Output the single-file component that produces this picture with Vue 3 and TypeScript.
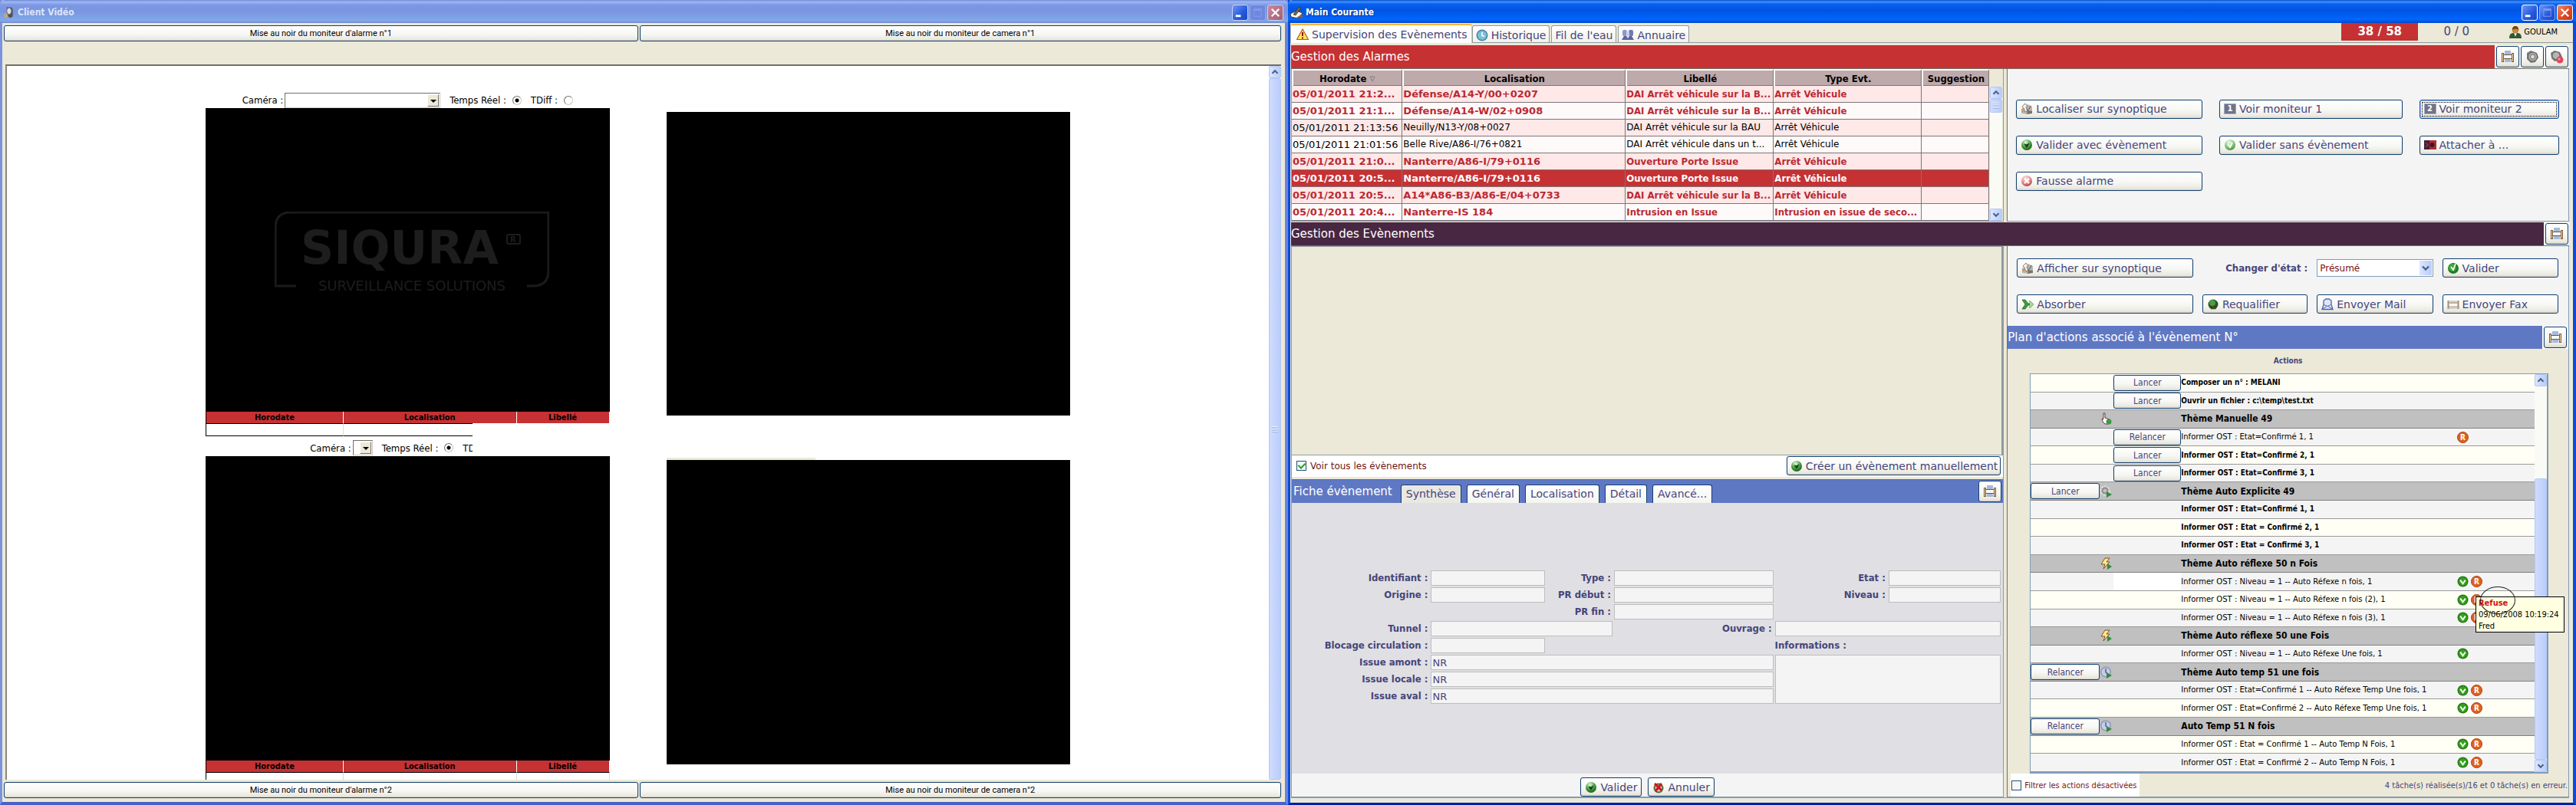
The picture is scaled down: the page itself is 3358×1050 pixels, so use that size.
<script setup lang="ts">
import { ref } from 'vue'

interface Alarm {
  date: string
  place: string
  label: string
  type: string
  state: 'unread' | 'read' | 'selected'
}

interface Command {
  text: string
  icon?: string
  monitor?: number
  focus?: boolean
}

interface Action {
  text: string
  theme?: boolean
  done?: boolean
  themeButton?: string
  icon?: string
  button?: string
  ok?: boolean
  refused?: boolean
  tip?: boolean
  blank?: boolean
}

const alarms: Alarm[] = [
  { date: '05/01/2011 21:2...', place: 'Défense/A14-Y/00+0207', label: 'DAI Arrêt véhicule sur la B...', type: 'Arrêt Véhicule', state: 'unread' },
  { date: '05/01/2011 21:1...', place: 'Défense/A14-W/02+0908', label: 'DAI Arrêt véhicule sur la B...', type: 'Arrêt Véhicule', state: 'unread' },
  { date: '05/01/2011 21:13:56', place: 'Neuilly/N13-Y/08+0027', label: 'DAI Arrêt véhicule sur la BAU', type: 'Arrêt Véhicule', state: 'read' },
  { date: '05/01/2011 21:01:56', place: 'Belle Rive/A86-I/76+0821', label: 'DAI Arrêt véhicule dans un t...', type: 'Arrêt Véhicule', state: 'read' },
  { date: '05/01/2011 21:0...', place: 'Nanterre/A86-I/79+0116', label: 'Ouverture Porte Issue', type: 'Arrêt Véhicule', state: 'unread' },
  { date: '05/01/2011 20:5...', place: 'Nanterre/A86-I/79+0116', label: 'Ouverture Porte Issue', type: 'Arrêt Véhicule', state: 'selected' },
  { date: '05/01/2011 20:5...', place: 'A14*A86-B3/A86-E/04+0733', label: 'DAI Arrêt véhicule sur la B...', type: 'Arrêt Véhicule', state: 'unread' },
  { date: '05/01/2011 20:4...', place: 'Nanterre-IS 184', label: 'Intrusion en Issue', type: 'Intrusion en issue de seco...', state: 'unread' },
]

const alarmButtons: Command[] = [
  { icon: 'locate', text: 'Localiser sur synoptique' },
  { monitor: 1, text: 'Voir moniteur 1' },
  { monitor: 2, text: 'Voir moniteur 2', focus: true },
  { icon: 'check', text: 'Valider avec évènement' },
  { icon: 'check-light', text: 'Valider sans évènement' },
  { icon: 'attach', text: 'Attacher à ...' },
  { icon: 'false', text: 'Fausse alarme' },
]

const actions: Action[] = [
  { text: 'Composer un n° : MELANI', button: 'Lancer' },
  { text: 'Ouvrir un fichier : c:\\temp\\test.txt', button: 'Lancer' },
  { text: 'Thème Manuelle 49', theme: true, icon: 'hand' },
  { text: 'Informer OST : Etat=Confirmé 1, 1', button: 'Relancer', done: true, refused: true },
  { text: 'Informer OST : Etat=Confirmé 2, 1', button: 'Lancer' },
  { text: 'Informer OST : Etat=Confirmé 3, 1', button: 'Lancer' },
  { text: 'Thème Auto Explicite 49', theme: true, icon: 'gear', themeButton: 'Lancer' },
  { text: 'Informer OST : Etat=Confirmé 1, 1' },
  { text: 'Informer OST : Etat = Confirmé 2, 1' },
  { text: 'Informer OST : Etat = Confirmé 3, 1' },
  { text: 'Thème Auto réflexe 50 n Fois', theme: true, icon: 'bolt' },
  { text: 'Informer OST : Niveau = 1 -- Auto Réfexe n fois, 1', done: true, ok: true, refused: true, blank: true },
  { text: 'Informer OST : Niveau = 1 -- Auto Réfexe n fois (2), 1', done: true, ok: true, refused: true, tip: true },
  { text: 'Informer OST : Niveau = 1 -- Auto Réfexe n fois (3), 1', done: true, ok: true, refused: true },
  { text: 'Thème Auto réflexe 50 une Fois', theme: true, icon: 'bolt' },
  { text: 'Informer OST : Niveau = 1 -- Auto Réfexe Une fois, 1', done: true, ok: true },
  { text: 'Thème Auto temp 51 une fois', theme: true, icon: 'timer', themeButton: 'Relancer' },
  { text: 'Informer OST : Etat=Confirmé 1 -- Auto Réfexe Temp Une fois, 1', done: true, ok: true, refused: true },
  { text: 'Informer OST : Etat=Confirmé 2 -- Auto Réfexe Temp Une fois, 1', done: true, ok: true, refused: true },
  { text: 'Auto Temp 51 N fois', theme: true, icon: 'timer', themeButton: 'Relancer' },
  { text: 'Informer OST : Etat = Confirmé 1 -- Auto Temp N Fois, 1', done: true, ok: true, refused: true },
  { text: 'Informer OST : Etat = Confirmé 2 -- Auto Temp N Fois, 1', done: true, ok: true, refused: true },
]

const ficheTabs = ['Synthèse', 'Général', 'Localisation', 'Détail', 'Avancé...']
const activeTab = ref('Synthèse')
const showAll = ref(true)
const filterDisabled = ref(false)
const mode1 = ref('live')
const mode2 = ref('live')
const amont = ref('NR')
const locale = ref('NR')
const aval = ref('NR')
</script>

<template>
  <div class="desktop">
    <svg class="defs" width="0" height="0" aria-hidden="true">
      <defs>
        <radialGradient id="gGreen" cx="0.4" cy="0.25" r="0.8">
          <stop offset="0" stop-color="#e4f6e0" /><stop offset="0.5" stop-color="#4fa646" /><stop offset="1" stop-color="#0f5a14" />
        </radialGradient>
        <radialGradient id="gLight" cx="0.4" cy="0.25" r="0.8">
          <stop offset="0" stop-color="#f2fbef" /><stop offset="0.6" stop-color="#7cc774" /><stop offset="1" stop-color="#3c8a3a" />
        </radialGradient>
        <radialGradient id="gRed" cx="0.4" cy="0.25" r="0.8">
          <stop offset="0" stop-color="#fbe3e3" /><stop offset="0.6" stop-color="#e08a8c" /><stop offset="1" stop-color="#b03238" />
        </radialGradient>
      </defs>
      <symbol id="i-locate" viewBox="0 0 16 16">
        <path d="M1 8l8-6 6 3v8l-6 2-8-1z" fill="#b9b6b0" /><path d="M9 10l6 1v3l-7 1z" fill="#77736c" />
        <path d="M2 5l4-4 3 4-2 1 2 5-3 1-2-5z" fill="#f3f1ea" stroke="#6b655b" stroke-width="0.8" />
        <path d="M8 10q4-1 5-6" fill="none" stroke="#555" stroke-width="1" /><rect x="1" y="9" width="3" height="3" fill="#d6926a" />
      </symbol>
      <symbol id="i-check" viewBox="0 0 16 16">
        <circle cx="8" cy="8" r="7" fill="url(#gGreen)" /><path d="M5 7l3 4 3-5-3 2z" fill="#12331a" stroke="#12331a" stroke-width="0.8" />
      </symbol>
      <symbol id="i-check-light" viewBox="0 0 16 16">
        <circle cx="8" cy="8" r="7" fill="url(#gLight)" /><path d="M5 7l3 4 3-6" fill="none" stroke="#fff" stroke-width="1.8" />
      </symbol>
      <symbol id="i-valid" viewBox="0 0 16 16">
        <circle cx="8" cy="8" r="7" fill="#1f7d22" /><circle cx="7" cy="7" r="5" fill="#43a63f" /><path d="M5 6l3 4 3-8" fill="none" stroke="#fff" stroke-width="1.600" />
      </symbol>
      <symbol id="i-false" viewBox="0 0 16 16">
        <circle cx="8" cy="8" r="7" fill="url(#gRed)" /><path d="M5 5l6 6M11 5l-6 6" stroke="#fff" stroke-width="2" />
      </symbol>
      <symbol id="i-attach" viewBox="0 0 16 16">
        <rect x="0" y="2" width="16" height="12" fill="#b42a36" /><rect x="0" y="2" width="7" height="12" fill="#3d1f3c" /><circle cx="10.500" cy="8" r="3" fill="#3a1a22" /><path d="M2 5l3 3-3 3" fill="none" stroke="#a23045" stroke-width="1.5" />
      </symbol>
      <symbol id="i-absorb" viewBox="0 0 16 16">
        <path d="M1 2h4l4 5h2V3l5 5-5 5V9H9l-4 5H1l4-6z" fill="#3f9b3d" stroke="#1d5e1f" stroke-width="0.7" /><path d="M11 3l5 5-5 5z" fill="#a8d99f" />
      </symbol>
      <symbol id="i-requal" viewBox="0 0 16 16">
        <circle cx="8" cy="8" r="6.500" fill="#1f5f22" /><circle cx="7" cy="6" r="4" fill="#4f9a48" /><path d="M2 9l4 6 1-4zM14 8l-3 7-2-4z" fill="#5a3320" />
      </symbol>
      <symbol id="i-mail" viewBox="0 0 16 16">
        <path d="M1 14.500l2-6V3l3-2h4l3 2v5.500l2 6z" fill="#dfe6fa" stroke="#4e62ae" stroke-width="1.3" /><path d="M3.500 8.500l4.500 2 4.500-2M1 14.500l6-4M15 14.500l-6-4" fill="none" stroke="#4e62ae" />
      </symbol>
      <symbol id="i-fax" viewBox="0 0 16 16">
        <rect x="3" y="3" width="10" height="11" fill="#d9d3c7" /><path d="M1.500 3v11M14.500 3v11" stroke="#9b9182" stroke-width="2" /><path d="M2 6h12M2 11h12" stroke="#9b9182" /><rect x="3" y="7" width="10" height="3.500" fill="#f9f7f1" />
      </symbol>
      <symbol id="i-print" viewBox="0 0 18 18">
        <rect x="5" y="1" width="8" height="15" fill="#a7b9dc" /><rect x="3" y="7" width="12" height="4" fill="#fbfaf6" />
        <path d="M2.500 4v12M15.500 4v12" stroke="#7c5a34" stroke-width="3" /><path d="M2.500 5v10M15.500 5v10" stroke="#ecd9b4" />
        <path d="M3 6.500h12M3 11.500h12" stroke="#6d573d" />
      </symbol>
      <symbol id="i-speaker" viewBox="0 0 18 18">
        <path d="M2 4l5-3 8 3 2 6-4 6-6 1-5-5z" fill="#7d7d7d" /><circle cx="9.500" cy="9" r="6" fill="#a9a9a9" stroke="#5d5d5d" /><circle cx="9.500" cy="9" r="3" fill="#dcdcdc" stroke="#6f6f6f" />
      </symbol>
      <symbol id="i-mute" viewBox="0 0 18 18">
        <path d="M1 4l5-3 7 2 3 6-4 5-6 1-4-4z" fill="#7d7d7d" /><circle cx="8" cy="7.500" r="5" fill="#b5b5b5" stroke="#5d5d5d" /><circle cx="13" cy="13" r="4.500" fill="#e6455a" /><circle cx="12" cy="12" r="1.500" fill="#f79aa5" />
      </symbol>
      <symbol id="i-user" viewBox="0 0 16 16">
        <path d="M0 16q0-7 5-7h6q5 0 5 7z" fill="#2e5a34" /><path d="M6 9l2 5 2-5z" fill="#f2ead9" /><circle cx="8" cy="5" r="4.500" fill="#c98a3c" /><path d="M4 5q0-5 4-5t4 5q-3-3-8 0z" fill="#704214" />
      </symbol>
      <symbol id="i-warn" viewBox="0 0 16 16">
        <path d="M8 1l7.500 13.500H.5z" fill="#ffe25a" stroke="#b8561c" stroke-width="1.2" /><path d="M8 5v5M8 11.500v2" stroke="#8b1d10" stroke-width="2" />
      </symbol>
      <symbol id="i-clock" viewBox="0 0 16 16">
        <circle cx="8" cy="8" r="7.500" fill="#3f86a8" /><circle cx="8" cy="8" r="6" fill="#7fc0d8" /><path d="M8 4v4.500l3 1" fill="none" stroke="#fff" stroke-width="1.600" />
      </symbol>
      <symbol id="i-people" viewBox="0 0 16 16">
        <rect x="1" y="1" width="6" height="8" rx="2" fill="#8f98c9" /><rect x="9" y="1" width="6" height="8" rx="2" fill="#6f79b3" /><path d="M0 14l3-5h3l2 3 2-3h3l3 5z" fill="#5d659c" /><rect x="6" y="3" width="4" height="7" fill="#c9cfe9" />
      </symbol>
      <symbol id="i-hand" viewBox="0 0 16 16">
        <path d="M5 1v8l-2-1 1 4 3 3h5l1-6-6-2V1z" fill="#fff" stroke="#6a3a34" /><circle cx="12" cy="12" r="3.500" fill="#3c9a46" />
      </symbol>
      <symbol id="i-gear" viewBox="0 0 16 16">
        <circle cx="7" cy="7" r="5" fill="none" stroke="#dedede" stroke-width="3.500" stroke-dasharray="2.500 1.200" /><circle cx="7" cy="7" r="3.500" fill="none" stroke="#8c8c8c" stroke-width="2" /><path d="M9 8l7 4-7 4z" fill="#2f8c3a" />
      </symbol>
      <symbol id="i-bolt" viewBox="0 0 16 16">
        <path d="M7 1h6L9 6h4l-8 9 2-6H2z" fill="#fbe98a" stroke="#8a4f2a" /><path d="M10 8l6 4-6 4z" fill="#2f8c3a" />
      </symbol>
      <symbol id="i-timer" viewBox="0 0 16 16">
        <circle cx="8" cy="7.500" r="7" fill="#8e97bd" /><circle cx="8" cy="7.500" r="5.500" fill="#c6cce6" /><path d="M8 3v5l3 2" fill="none" stroke="#44507f" stroke-width="1.300" /><path d="M9 8l7 4-7 4z" fill="#2f8c3a" />
      </symbol>
      <symbol id="i-ok" viewBox="0 0 16 16">
        <circle cx="8" cy="8" r="7.500" fill="#237a12" /><circle cx="8" cy="8" r="6" fill="#35a01c" /><path d="M4.500 6l3.500 5 3.500-5" fill="none" stroke="#fff" stroke-width="2" />
      </symbol>
      <symbol id="i-cancel" viewBox="0 0 16 16">
        <circle cx="8" cy="9" r="6.500" fill="#4d6b4a" /><circle cx="8" cy="9" r="4.500" fill="#c9d6c4" /><path d="M3 3l9 9M12 3l-8 10" stroke="#d3141c" stroke-width="3" />
      </symbol>
      <symbol id="i-cam" viewBox="0 0 16 20">
        <path d="M5 2h8l2 3v12l-4 2-6-3z" fill="#55504e" /><ellipse cx="9" cy="8" rx="3.500" ry="5" fill="#d7dde6" stroke="#8b8f98" /><path d="M0 13l5-2 3 6-6 3z" fill="#c0a58d" />
      </symbol>
      <symbol id="i-pen" viewBox="0 0 16 16">
        <path d="M0 10l8-4 8 3-6 7-9-2z" fill="#fffef3" stroke="#4e3a2d" /><path d="M4 11L11 1l3 1-7 10z" fill="#6f6a4e" stroke="#2e2a22" stroke-width="0.7" /><path d="M8 15l8-5v5z" fill="#8a5a48" />
      </symbol>
      <symbol id="i-up" viewBox="0 0 16 16"><path d="M4 10l4-4 4 4" fill="none" stroke="#4d6185" stroke-width="2.400" /></symbol>
      <symbol id="i-down" viewBox="0 0 16 16"><path d="M4 6l4 4 4-4" fill="none" stroke="#4d6185" stroke-width="2.400" /></symbol>
      <symbol id="i-min" viewBox="0 0 20 20"><rect x="4" y="13" width="7" height="3" fill="#fff" /></symbol>
      <symbol id="i-max" viewBox="0 0 20 20"><path d="M5 5h10v10H5z" fill="none" stroke="#7f9cf0" /><path d="M5 6h10" stroke="#7f9cf0" stroke-width="2.500" /></symbol>
      <symbol id="i-close" viewBox="0 0 20 20"><path d="M5 5l10 10M15 5L5 15" stroke="#fff" stroke-width="2.400" /></symbol>
    </svg>

    <section class="window video-window">
      <header class="title idle">
        <svg class="i16"><use href="#i-cam" /></svg>
        <h1>Client Vidéo</h1>
        <div class="caps">
          <button class="cap" aria-label="Réduire"><svg><use href="#i-min" /></svg></button>
          <button class="cap off" aria-label="Agrandir"><svg><use href="#i-max" /></svg></button>
          <button class="cap close" aria-label="Fermer"><svg><use href="#i-close" /></svg></button>
        </div>
      </header>
      <div class="blank-row">
        <button class="xp small">Mise au noir du moniteur d'alarme n°1</button>
        <button class="xp small">Mise au noir du moniteur de camera n°1</button>
      </div>
      <div class="viewport">
        <div class="screens">
          <div class="screen-col">
            <div class="cam-row first">
              <label for="cam1">Caméra :</label>
              <span class="combo wide"><select id="cam1"></select><i></i></span>
              <label class="gap" for="live1">Temps Réel :</label><input id="live1" v-model="mode1" type="radio" value="live" name="m1">
              <label class="gap" for="diff1">TDiff :</label><input id="diff1" v-model="mode1" type="radio" value="diff" name="m1">
            </div>
            <div class="screen">
              <svg class="logo" viewBox="0 0 358 110" fill="none">
                <path d="M28 97H1V21Q1 1 21 1H357V77Q357 97 337 97H329" stroke="#1b1b1b" stroke-width="3" />
                <text x="163" y="68" text-anchor="middle" font-size="60" font-weight="bold" fill="#1d1d1d">SIQURA</text>
                <rect x="303" y="30" width="17" height="12" rx="2" stroke="#1d1d1d" stroke-width="2" />
                <text x="311" y="40" text-anchor="middle" font-size="10" font-weight="bold" fill="#1d1d1d">R</text>
                <text x="179" y="103" text-anchor="middle" font-size="18" fill="#1d1d1d">SURVEILLANCE SOLUTIONS</text>
              </svg>
            </div>
            <table class="mini">
              <thead><tr><th class="c1">Horodate</th><th class="c2">Localisation</th><th>Libellé</th></tr></thead>
              <tbody><tr><td></td><td></td><td></td></tr></tbody>
            </table>
            <div class="cam-row second">
              <label for="cam2">Caméra :</label>
              <span class="combo"><select id="cam2"></select><i></i></span>
              <label class="gap" for="live2">Temps Réel :</label><input id="live2" v-model="mode2" type="radio" value="live" name="m2">
              <label class="gap" for="diff2">TDiff :</label><input id="diff2" v-model="mode2" type="radio" value="diff" name="m2">
              <div class="mask"></div>
            </div>
            <div class="screen"></div>
            <table class="mini">
              <thead><tr><th class="c1">Horodate</th><th class="c2">Localisation</th><th>Libellé</th></tr></thead>
              <tbody><tr><td></td><td></td><td></td></tr></tbody>
            </table>
          </div>
          <div class="screen-col right">
            <div class="screen"></div>
            <div class="between"></div>
            <div class="screen"></div>
          </div>
        </div>
        <div class="scroll">
          <span class="sbtn"><svg><use href="#i-up" /></svg></span>
          <span class="thumb"></span>
        </div>
      </div>
      <div class="blank-row bottom">
        <button class="xp small">Mise au noir du moniteur d'alarme n°2</button>
        <button class="xp small">Mise au noir du moniteur de camera n°2</button>
      </div>
    </section>

    <section class="window main-window">
      <header class="title">
        <svg class="i16"><use href="#i-pen" /></svg>
        <h1>Main Courante</h1>
        <div class="caps">
          <button class="cap" aria-label="Réduire"><svg><use href="#i-min" /></svg></button>
          <button class="cap off" aria-label="Agrandir"><svg><use href="#i-max" /></svg></button>
          <button class="cap close" aria-label="Fermer"><svg><use href="#i-close" /></svg></button>
        </div>
      </header>
      <nav class="tabs">
        <button class="tab on"><svg class="i16"><use href="#i-warn" /></svg>Supervision des Evènements</button>
        <button class="tab"><svg class="i16"><use href="#i-clock" /></svg>Historique</button>
        <button class="tab">Fil de l'eau</button>
        <button class="tab"><svg class="i16"><use href="#i-people" /></svg>Annuaire</button>
        <span class="count hot">38 / 58</span>
        <span class="count">0 / 0</span>
        <span class="user"><svg class="i16"><use href="#i-user" /></svg>GOULAM</span>
      </nav>

      <main class="content">
        <div class="bar red">
          <h2>Gestion des Alarmes</h2>
          <button class="xp tool" aria-label="Imprimer les alarmes"><svg><use href="#i-print" /></svg></button>
          <button class="xp tool" aria-label="Son"><svg><use href="#i-speaker" /></svg></button>
          <button class="xp tool" aria-label="Couper le son"><svg><use href="#i-mute" /></svg></button>
        </div>

        <div class="split">
          <div class="left alarm-list">
            <table class="alarms">
              <colgroup><col class="w1"><col class="w2"><col class="w3"><col class="w3"><col class="w5"></colgroup>
              <thead>
                <tr>
                  <th>Horodate <svg class="sort" viewBox="0 0 8 8"><path d="M1 1h6L4 7z" fill="none" stroke="#8a7f80" /></svg></th>
                  <th>Localisation</th><th>Libellé</th><th>Type Evt.</th><th>Suggestion</th>
                </tr>
              </thead>
              <tbody>
                <tr v-for="(a, i) in alarms" :key="i" :class="a.state">
                  <td class="date">{{ a.date }}</td><td class="place">{{ a.place }}</td><td>{{ a.label }}</td><td>{{ a.type }}</td><td></td>
                </tr>
              </tbody>
            </table>
            <div class="scroll under-head">
              <span class="sbtn"><svg><use href="#i-up" /></svg></span>
              <span class="thumb short"></span>
              <span class="sbtn last"><svg><use href="#i-down" /></svg></span>
            </div>
          </div>
          <div class="right-side pane">
            <div class="alarm-buttons">
              <button v-for="b in alarmButtons" :key="b.text" class="xp cmd" :class="{ focus: b.focus }">
                <span v-if="b.monitor" class="monitor">{{ b.monitor }}</span>
                <svg v-else class="i16"><use :href="'#i-' + b.icon" /></svg>{{ b.text }}
              </button>
            </div>
          </div>
        </div>

        <div class="bar plum">
          <h2>Gestion des Evènements</h2>
          <button class="xp tool" aria-label="Imprimer les évènements"><svg><use href="#i-print" /></svg></button>
        </div>

        <div class="split grow">
          <div class="left events">
            <div class="event-list"></div>
            <div class="strip">
              <input id="all" v-model="showAll" type="checkbox"><label for="all">Voir tous les évènements</label>
              <button class="xp cmd create"><svg class="i16"><use href="#i-check" /></svg>Créer un évènement manuellement</button>
            </div>
            <div class="bar blue fiche-bar">
              <h2>Fiche évènement</h2>
              <div class="fiche-tabs">
                <button v-for="t in ficheTabs" :key="t" :class="{ on: t === activeTab }" @click="activeTab = t">{{ t }}</button>
              </div>
              <button class="xp tool" aria-label="Imprimer la fiche"><svg><use href="#i-print" /></svg></button>
            </div>
            <form class="fiche" @submit.prevent>
              <div class="fields">
                <label for="f1">Identifiant :</label><input id="f1">
                <label for="f2">Type :</label><input id="f2">
                <label for="f3">Etat :</label><input id="f3">
                <label for="f4">Origine :</label><input id="f4">
                <label for="f5">PR début :</label><input id="f5">
                <label for="f6">Niveau :</label><input id="f6">
                <label for="f7" class="at3">PR fin :</label><input id="f7">
                <label for="f8" class="at1">Tunnel :</label><input id="f8" class="two">
                <label for="f9">Ouvrage :</label><input id="f9" class="two">
                <label for="f10">Blocage circulation :</label><input id="f10">
                <label for="f11" class="info">Informations :</label>
                <label for="f12" class="at1">Issue amont :</label><input id="f12" v-model="amont" class="three">
                <textarea id="f11"></textarea>
                <label for="f13" class="at1">Issue locale :</label><input id="f13" v-model="locale" class="three">
                <label for="f14" class="at1">Issue aval :</label><input id="f14" v-model="aval" class="three">
              </div>
            </form>
            <div class="fiche-foot">
              <button class="xp cmd"><svg class="i16"><use href="#i-check" /></svg>Valider</button>
              <button class="xp cmd"><svg class="i16"><use href="#i-cancel" /></svg>Annuler</button>
            </div>
          </div>

          <div class="right-side plan">
            <div class="event-buttons">
              <button class="xp cmd"><svg class="i16"><use href="#i-locate" /></svg>Afficher sur synoptique</button>
              <label for="state">Changer d'état :</label>
              <span class="state"><select id="state"><option>Présumé</option></select><svg><use href="#i-down" /></svg></span>
              <button class="xp cmd"><svg class="i16"><use href="#i-valid" /></svg>Valider</button>
              <button class="xp cmd"><svg class="i16"><use href="#i-absorb" /></svg>Absorber</button>
              <button class="xp cmd"><svg class="i16"><use href="#i-requal" /></svg>Requalifier</button>
              <button class="xp cmd"><svg class="i16"><use href="#i-mail" /></svg>Envoyer Mail</button>
              <button class="xp cmd"><svg class="i16"><use href="#i-fax" /></svg>Envoyer Fax</button>
            </div>
            <div class="bar blue plan-bar">
              <h2>Plan d'actions associé à l'évènement N°</h2>
              <button class="xp tool" aria-label="Imprimer le plan"><svg><use href="#i-print" /></svg></button>
            </div>
            <h3>Actions</h3>
            <div class="action-box">
              <table class="actions">
                <colgroup><col class="a1"><col class="a2"><col class="a3"><col><col class="a5"></colgroup>
                <tbody>
                  <tr v-for="(a, i) in actions" :key="i" :class="{ theme: a.theme, done: a.done, ivory: i % 2 === 0 }">
                    <td><button v-if="a.themeButton" class="xp run">{{ a.themeButton }}</button></td>
                    <td><svg v-if="a.icon" class="i16"><use :href="'#i-' + a.icon" /></svg></td>
                    <td :class="{ blank: a.blank }"><button v-if="a.button" class="xp run">{{ a.button }}</button></td>
                    <td class="what">{{ a.text }}</td>
                    <td>
                      <div class="marks">
                        <svg v-if="a.ok"><use href="#i-ok" /></svg>
                        <span v-if="a.refused" class="refused">R</span>
                        <div v-if="a.tip" class="tip"><b>Refuse</b><span>09/06/2008 10:19:24</span><span>Fred</span></div>
                        <div v-if="a.tip" class="ring"></div>
                      </div>
                    </td>
                  </tr>
                </tbody>
              </table>
              <div class="scroll">
                <span class="sbtn"><svg><use href="#i-up" /></svg></span>
                <span class="track"></span>
                <span class="thumb plain"></span>
                <span class="sbtn"><svg><use href="#i-down" /></svg></span>
              </div>
            </div>
            <div class="plan-foot">
              <div class="filter"><input id="filter" v-model="filterDisabled" type="checkbox"><label for="filter">Filtrer les actions désactivées</label></div>
              <span>4 tâche(s) réalisée(s)/16 et 0 tâche(s) en erreur.</span>
            </div>
          </div>
        </div>
      </main>
    </section>
  </div>
</template>

<style>
body { background: #ece9d8; }
</style>

<style scoped>
* { box-sizing: border-box; }
.desktop { display: flex; height: 100vh; font-family: "DejaVu Sans", Verdana, sans-serif; font-size: 14px; color: #45457a; background: #ece9d8; }
.defs { position: absolute; }
h1, h2, h3 { margin: 0; }
button, input, select, textarea { font: inherit; color: inherit; margin: 0; }
svg { flex: none; }
.i16 { width: 16px; height: 16px; display: block; }
.window { flex: 1 1 0; min-width: 0; display: flex; flex-direction: column; background: #ece9d8; }
.title { height: 30px; flex: none; display: flex; align-items: center; gap: 4px; padding: 2px 4px 0 3px; border-radius: 6px 6px 0 0; background: linear-gradient(#0a4fc8, #3a90ff 8%, #0a5fee 18%, #0054e3 45%, #0066ff 85%, #0048c8); }
.title.idle { background: linear-gradient(#6f8ad4, #9db6f4 8%, #7d97e4 22%, #7a96df 50%, #82a8ea 90%, #7089cf); }
.title h1 { flex: 1; font: bold 12px "DejaVu Sans Condensed", sans-serif; color: #fff; text-shadow: 1px 1px 1px #0a2f7d; }
.title.idle h1 { color: #dbe4fb; text-shadow: none; }
.caps { display: flex; gap: 2px; }
.cap { width: 21px; height: 21px; padding: 0; border: 1px solid #fff; border-radius: 3px; background: linear-gradient(135deg, #6f96f5, #2458dc 60%, #1b48c4); }
.cap svg { width: 19px; height: 19px; display: block; }
.cap.close { background: linear-gradient(135deg, #f0906f, #df4a25 55%, #c03a18); }
.cap.off { border-color: #8fabf0; }
.idle .cap { border-color: #c5d3f8; }
.idle .cap.off { background: #6f88dc; border-color: #8ea5ea; }
.idle .cap.close { background: linear-gradient(135deg, #c98a9c, #a35e74); }

.xp { border: 1px solid #14406f; border-radius: 3px; background: linear-gradient(#fff, #f7f7f4 55%, #ebe9e0 88%, #d8d3c6); box-shadow: 0 0 1px #9bb3c9; }
.small { font: 11px Roboto, sans-serif; color: #000; height: 21px; padding: 0; flex: 836 1 0; }
.small:first-child { flex-grow: 826; }
.cmd { display: flex; align-items: center; gap: 4px; height: 25px; padding: 0 5px; white-space: nowrap; }
.cmd.focus { border-color: #1c4f9c; box-shadow: inset 0 0 0 1px #a9c3f1; outline: 1px dotted #000; outline-offset: -4px; }
.monitor { width: 16px; height: 14px; border: 1px solid #a6aabb; background: #6f7389; color: #fff; font: bold 10px/12px "DejaVu Sans", sans-serif; text-align: center; }
.tool { width: 30px; height: 28px; padding: 0; display: flex; align-items: center; justify-content: center; flex: none; }
.tool svg { width: 18px; height: 18px; }

.video-window { border-left: 3px solid #7a93e0; border-right: 4px solid #6a84dc; border-bottom: 4px solid #4a60c8; }
.video-window .title { margin: 0 -4px 0 -3px; padding-right: 6px; }
.blank-row { display: flex; gap: 2px; padding: 3px 5px 0 2px; height: 54px; flex: none; }
.blank-row.bottom { height: 29px; }
.viewport { flex: 1; min-height: 0; overflow: hidden; margin: 0 5px 0 4px; border-top: 2px solid #716f64; border-left: 2px solid #8a887c; background: #fff; display: flex; }
.screens { flex: 1; min-width: 0; display: flex; justify-content: center; gap: 74px; }
.screen-col { flex: 0 0 32%; min-width: 0; }
.screen-col.right { padding-top: 60px; }
.screen { aspect-ratio: 526 / 396; background: #000; display: flex; align-items: center; justify-content: center; }
.between { height: 58px; border-bottom: 3px solid #ece9d8; border-image: linear-gradient(90deg, #ece9d8 37%, #fff 37%) 1; }
.logo { width: 68%; margin: 0 0 3% 2%; }
.cam-row { display: flex; align-items: center; justify-content: center; font: 13px "DejaVu Sans Condensed", sans-serif; color: #000; position: relative; white-space: nowrap; }
.cam-row.first { height: 55px; padding-top: 34px; }
.cam-row.second { height: 26px; padding-top: 4px; }
.cam-row .gap { margin: 0 8px 0 12px; }
.cam-row input { appearance: none; width: 12px; height: 12px; border: 1px solid #6f6d64; border-right-color: #c9c7bd; border-bottom-color: #c9c7bd; border-radius: 50%; background: #fff; }
.cam-row input:checked { background: radial-gradient(#000 2px, #fff 3px); }
.combo { display: flex; height: 20px; border: 1px solid #716f64; border-right-color: #ccc9bd; border-bottom-color: #ccc9bd; background: #fff; position: relative; width: 26px; margin-left: 2px; }
.combo.wide { width: 203px; }
.combo select { appearance: none; border: 0; background: none; width: 100%; padding: 0; }
.combo i { position: absolute; right: 1px; top: 1px; bottom: 1px; width: 15px; background: #ece9d8; border: 1px solid #fff; border-right-color: #716f64; border-bottom-color: #716f64; pointer-events: none; }
.combo i::after { content: ""; position: absolute; left: 3px; top: 6px; border: 4px solid transparent; border-top-color: #000; border-bottom: 0; }
.mask { position: absolute; left: 66%; right: -1px; top: -17px; bottom: 0; background: #fff; }
.mini { width: 100%; table-layout: fixed; border-collapse: separate; border-spacing: 0; border-left: 1px solid #000; }
.mini th { height: 16px; padding: 0; background: #c63133; color: #000; font: bold 11px/15px "DejaVu Sans Condensed", sans-serif; border-right: 1px solid #fff; border-bottom: 1px solid #000; }
.mini td { height: 16px; padding: 0; border-right: 1px solid #ddd; border-bottom: 1px solid #000; }
.c1 { width: 34%; }
.c2 { width: 43%; }

.scroll { width: 16px; flex: none; display: flex; flex-direction: column; background: #fbfbf6; }
.sbtn { height: 16px; flex: none; border: 1px solid #b4c8f6; border-radius: 2px; background: linear-gradient(90deg, #dbe5fe, #b9cdfa); }
.sbtn svg { width: 14px; height: 14px; display: block; }
.thumb { flex: 1; border: 1px solid #b4c8f6; border-radius: 2px; background: repeating-linear-gradient(#eef4fe 0 1px, #9cb4ea 1px 2px) center / 8px 8px no-repeat, linear-gradient(90deg, #cfdcfd, #bacdfb); }
.thumb.short { flex: 0 0 18px; }
.thumb.plain { flex: 364; background: linear-gradient(90deg, #cfdcfd, #bacdfb); }
.track { flex: 120; }
.last { margin-top: auto; }

.main-window { border: solid #0a4bdc; border-width: 0 4px 3px 3px; border-bottom-color: #0020a8; }
.main-window .title { margin: 0 -4px 0 -3px; }
.tabs { display: flex; align-items: flex-end; height: 26px; flex: none; border-bottom: 1px solid #919b9c; padding-right: 20px; }
.tab { height: 22px; display: flex; align-items: center; gap: 4px; padding: 2px 4px 0 4px; border: 1px solid #919b9c; border-bottom: 0; border-radius: 3px 3px 0 0; background: linear-gradient(#fff, #f2f1ea); margin-right: 2px; white-space: nowrap; }
.tab.on { height: 25px; margin: 0 0 -1px 0; padding: 0 5px 0 7px; border-color: #c9c7ba; border-top: 2px solid #f8b637; background: #fdfdfb; position: relative; }
.count { width: 100px; height: 23px; line-height: 23px; text-align: center; font-size: 15px; align-self: flex-start; }
.hot { margin-left: auto; background: #c63133; color: #fff; font-weight: bold; }
.user { display: flex; align-items: center; gap: 3px; height: 23px; align-self: flex-start; margin-left: 19px; font: 11px "DejaVu Sans Condensed", sans-serif; color: #000; }

.content { flex: 1; min-height: 0; display: flex; flex-direction: column; margin: 3px 5px 6px 1px; border-bottom: 1px solid #7f9db9; }
.bar { height: 30px; flex: none; display: flex; align-items: center; gap: 2px; padding-right: 1px; background: #fff; }
.bar h2 { flex: 1; font-size: 15px; font-weight: normal; line-height: 30px; color: #fff; white-space: nowrap; }
.red h2 { background: #c63133; }
.plum h2 { background: #482742; }
.blue h2 { background: #5f78c4; }
.plan-bar { padding-right: 2px; }
.split { display: flex; flex: none; border-top: 1px solid #716f64; gap: 4px; margin-bottom: 1px; }
.grow { flex: 1; min-height: 0; margin: 0; }
.left { flex: 929 1 0; min-width: 0; border: 1px solid #7f9db9; border-top: 0; }
.right-side { flex: 732 1 0; min-width: 0; border: 1px solid #7f9db9; border-left: 1px solid #716f64; border-top: 0; }
.pane { background: #f4f4f4; display: flex; flex-direction: column; justify-content: center; }

.alarm-list { display: flex; gap: 1px; }
.alarms { flex: 1; min-width: 0; table-layout: fixed; border-collapse: separate; border-spacing: 0; color: #000; }
.w2 { width: 32%; }
.w3 { width: 193px; }
.w5 { width: 88px; }
.alarms th { height: 22px; padding: 0; background: #bea9ab; border: solid #fff; border-width: 2px 1px 0 2px; border-right-color: #7d7577; font: bold 13px/19px "DejaVu Sans Condensed", sans-serif; box-shadow: inset 0 -1px #7d7577; }
.sort { width: 8px; height: 8px; }
.alarms td { height: 22px; padding: 0 0 0 1px; border: solid #7d7577; border-width: 0 1px 1px 0; font-size: 12px; line-height: 21px; white-space: nowrap; overflow: hidden; background: #fffafa; }
.alarms tr:nth-child(odd) td { background: #ffe8e8; }
.alarms .unread td, .alarms .selected td { font-family: "DejaVu Sans Condensed", sans-serif; font-size: 13px; font-weight: bold; color: #b92a34; }
.alarms .unread .date, .alarms .unread .place, .alarms .selected .date, .alarms .selected .place { font-family: "DejaVu Sans", sans-serif; }
.alarms td.date { font-size: 13px; }
.alarms .selected td { background: #c63133; color: #fff; }
.under-head { margin-top: 23px; margin-right: 1px; }
.alarm-buttons { display: grid; grid-template-columns: 242fr 238fr 182fr; gap: 22px; padding: 0 12px 0 11px; }

.events { display: flex; flex-direction: column; }
.event-list { flex: 272 1 0; border: 1px solid #8f9ba0; border-width: 1px 2px 1px 0; }
.strip { display: flex; align-items: center; height: 28px; flex: none; background: #fff; padding: 0 3px 0 6px; font-size: 12px; color: #6e1616; margin-bottom: 3px; }
.strip label { margin-left: 5px; }
.strip .create { margin-left: auto; font-size: 14px; color: #45457a; padding: 0 3px 0 4px; }
input[type="checkbox"] { appearance: none; width: 13px; height: 13px; border: 1px solid #1c5180; background: #f6f6f3; position: relative; }
input[type="checkbox"]:checked::after { content: ""; position: absolute; left: 3px; top: 0; width: 4px; height: 7px; border: solid #21a121; border-width: 0 2px 2px 0; transform: rotate(45deg); }
.fiche-bar { border-top: 1px solid #716f64; height: 31px; background: #5f78c4; padding: 0 2px 0 2px; }
.fiche-bar h2 { flex: none; margin-right: 9px; }
.fiche-tabs { flex: 1; display: flex; gap: 7px; align-self: flex-end; }
.fiche-tabs button { height: 24px; padding: 0 6px; border: 1px solid #14406f; border-bottom: 0; border-radius: 3px 3px 0 0; background: linear-gradient(#fff, #f4f4f0); white-space: nowrap; }
.fiche-tabs button.on { background: #e9e8e2; }
.fiche { flex: 353 1 0; min-height: 0; background: #e0dfe3; display: flex; flex-direction: column; justify-content: center; padding: 0 3px 2px 2px; }
.fields { display: grid; grid-template-columns: 177fr 148fr 86fr 207fr 146fr 146fr; grid-auto-rows: 20px; gap: 2px; font: bold 13px/20px "DejaVu Sans Condensed", sans-serif; white-space: nowrap; }
.fields label { text-align: right; padding-right: 2px; }
.fields input, .fields textarea { border: 1px solid #bdbdbd; background: #f4f4f4; min-width: 0; width: 100%; padding: 0 1px; font: 13px "DejaVu Sans", sans-serif; resize: none; }
.fields .at1 { grid-column-start: 1; }
.fields .at3 { grid-column-start: 3; }
.fields .two { grid-column-end: span 2; }
.fields .three { grid-column: 2 / span 3; }
.fields .info { grid-column: 5 / span 2; text-align: left; }
.fields textarea { grid-column: 5 / span 2; grid-row: 6 / span 3; }
.fiche-foot { height: 30px; flex: none; display: flex; gap: 8px; align-items: flex-end; justify-content: center; background: #f4f4f4; }

.plan { display: flex; flex-direction: column; }
.event-buttons { flex: none; height: 104px; align-content: center; display: grid; grid-template-columns: 229fr 137fr 151fr 151fr; gap: 22px 12px; padding: 0 13px 0 12px; background: #f4f4f4; }
.event-buttons label { font: bold 13px/25px "DejaVu Sans Condensed", sans-serif; text-align: right; }
.state { position: relative; height: 23px; margin-top: 1px; border: 1px solid #7f9db9; background: #fff; }
.state select { appearance: none; border: 0; background: none; width: 100%; height: 100%; padding: 0 3px; font-size: 12px; color: #7a1212; }
.state svg { position: absolute; right: 1px; top: 1px; width: 16px; height: 19px; background: linear-gradient(90deg, #dbe5fe, #b9cdfa); pointer-events: none; }
h3 { font: bold 10px/32px "DejaVu Sans Condensed", sans-serif; text-align: center; flex: none; }
.action-box { flex: 1; min-height: 0; display: flex; border: 1px solid #7f9db9; border-width: 1px 2px 2px 1px; margin: 0 26px 0 29px; background: #fbfbf6; }
.actions { flex: 1; min-width: 0; table-layout: fixed; border-collapse: separate; border-spacing: 0; color: #000; }
.a1 { width: 90px; }
.a2 { width: 18px; }
.a3 { width: 88px; }
.a5 { width: 102px; }
.actions td { height: 22px; padding: 0; background: #f4f4f4; border-bottom: 1px solid #9a9a9a; vertical-align: middle; }
.actions .ivory td { background: #fffff6; }
.actions .theme td { background: #c0c0c0; border-bottom-color: #808080; }
.actions td.blank { background: #fff; }
.actions .what { font: bold 10px/12px "DejaVu Sans Condensed", sans-serif; white-space: nowrap; }
.actions .done .what { font: 10px/12px "DejaVu Sans", sans-serif; }
.actions .theme .what { font-size: 12px; }
.run { display: block; width: 100%; height: 21px; padding: 0; font: 12px "DejaVu Sans Condensed", sans-serif; color: #45457a; }
.marks { display: flex; gap: 3px; padding-left: 1px; position: relative; height: 15px; }
.marks svg { width: 15px; height: 15px; }
.refused { width: 15px; height: 15px; border: 1px solid #a8400f; border-radius: 50%; background: #e0601f; color: #fff; font: bold 10px/13px "DejaVu Sans Condensed", sans-serif; text-align: center; }
.tip { position: absolute; left: 25px; top: 3px; z-index: 1; border: 1px solid #000; background: #ffffe1; padding: 0 3px; font: 11px/15px "DejaVu Sans Condensed", sans-serif; display: flex; flex-direction: column; width: 116px; white-space: nowrap; }
.tip b { color: #d40f0f; }
.ring { position: absolute; left: 31px; top: -10px; width: 46px; height: 36px; border: 1px solid #222; border-radius: 50%; z-index: 2; }
.plan-foot { flex: none; height: 30px; display: flex; justify-content: space-between; align-items: center; font: 11px "DejaVu Sans Condensed", sans-serif; padding: 0 1px 0 4px; }
.filter { display: flex; align-items: center; align-self: stretch; gap: 4px; background: #fff; color: #7a1212; padding: 0 4px 0 1px; }
</style>
